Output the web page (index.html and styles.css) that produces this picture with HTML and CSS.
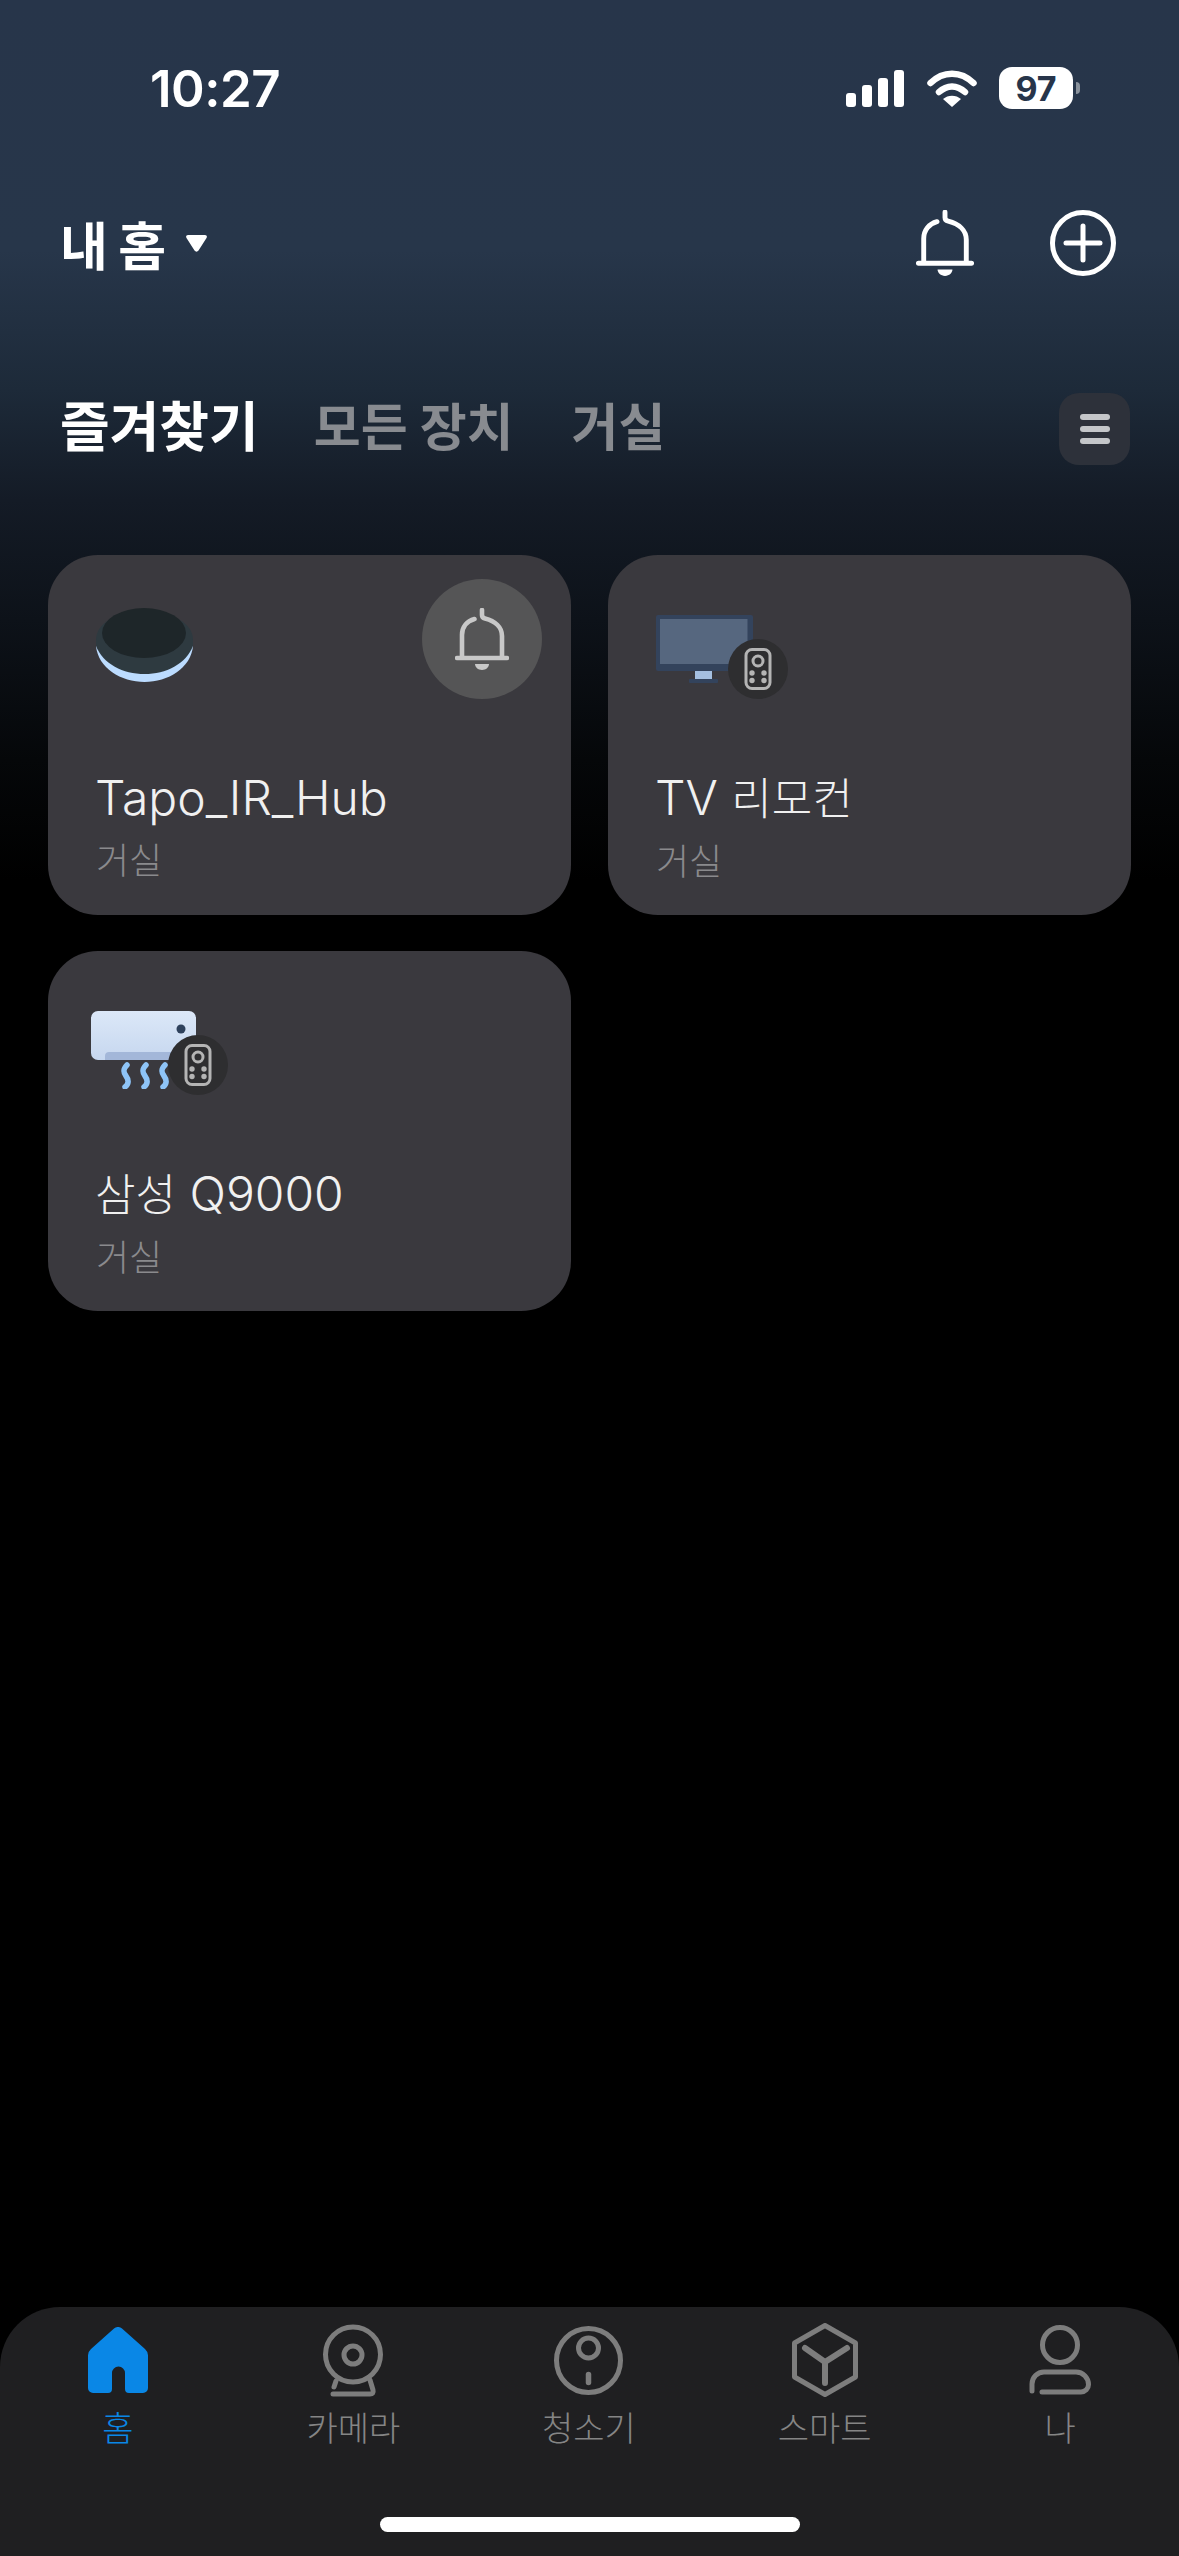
FILE: index.html
```html
<!DOCTYPE html>
<html lang="ko">
<head>
    <meta charset="UTF-8">
    <meta name="viewport" content="width=device-width, initial-scale=1.0">
    <title>내 홈</title>
    <link rel="stylesheet" href="styles.css">
</head>
<body>
    <svg class="defs" width="0" height="0">
        <symbol id="bell" viewBox="0 0 54 62">
            <path d="M7 50V27C7 19 12 13 19.5 11M27 2v5c0 2 1 3 3 3.5C40 13 47 19 47 28v22M2 50h50" fill="none" stroke="currentColor" stroke-width="4.6" stroke-linecap="round"/>
            <path d="M20 56h14c0 3-3 6-7 6s-7-3-7-6z" fill="currentColor"/>
        </symbol>
        <symbol id="remote" viewBox="0 0 60 60">
            <rect x="18" y="10.500" width="24" height="39" rx="6" fill="none" stroke="currentColor" stroke-width="3"/>
            <circle cx="30" cy="22" r="5" fill="none" stroke="currentColor" stroke-width="3"/>
            <circle cx="24" cy="34" r="2.700" fill="currentColor"/>
            <circle cx="36" cy="34" r="2.700" fill="currentColor"/>
            <circle cx="24" cy="41.500" r="2.700" fill="currentColor"/>
            <circle cx="36" cy="41.500" r="2.700" fill="currentColor"/>
        </symbol>
    </svg>

    <div class="status">
        <span class="time">10:27</span>
        <div class="status-icons">
            <div class="signal">
                <i class="s1"></i><i class="s2"></i><i class="s3"></i><i class="s4"></i>
            </div>
            <svg class="wifi" viewBox="0 0 50 37">
                <path d="M3.500 13C16 .5 34 .5 46.500 13M12 22c8-7.500 18-7.500 26 0" fill="none" stroke="#fff" stroke-width="6.500" stroke-linecap="round"/>
                <path d="M25 37l-9-8c5-4.500 13-4.500 18 0z" fill="#fff"/>
            </svg>
            <div class="battery"><span class="battery-level">97</span></div>
            <i class="battery-nub"></i>
        </div>
    </div>

    <div class="header">
        <div class="home-name">
            <span>내 홈</span>
            <svg class="caret" viewBox="0 0 21 17"><path d="M2 0h17c1.500 0 2.500 1.500 1.500 3l-8 12.500c-1 1.500-3 1.500-4 0L.5 3C-.5 1.500.5 0 2 0z" fill="#fff"/></svg>
        </div>
        <div class="header-actions">
            <svg class="header-bell"><use href="#bell"/></svg>
            <svg class="header-add" viewBox="0 0 66 66">
                <circle cx="33" cy="33" r="30.500" fill="none" stroke="#fff" stroke-width="5"/>
                <path d="M33 16v34M16 33h34" stroke="#fff" stroke-width="5" stroke-linecap="round"/>
            </svg>
        </div>
    </div>

    <div class="tabs">
        <span class="tab active">즐겨찾기</span>
        <span class="tab">모든 장치</span>
        <span class="tab">거실</span>
        <div class="menu-btn"><i></i><i></i><i></i></div>
    </div>

    <div class="cards">
        <div class="card">
            <svg class="thumb" viewBox="-5 0 110 85">
                <path d="M0 38C2 60 25 74 48.500 74S95 60 97 38z" fill="#bcdcff"/>
                <path d="M0 32C0 15 20 4 48.500 4S97 15 97 32v6C90 56 70 66 48.500 66S7 56 0 38z" fill="#2e3a40"/>
                <ellipse cx="48" cy="25" rx="42" ry="25" fill="#1e2629"/>
            </svg>
            <div class="notify"><svg class="notify-bell"><use href="#bell"/></svg></div>
            <div class="name">Tapo_IR_Hub</div>
            <div class="room">거실</div>
        </div>
        <div class="card">
            <svg class="thumb" viewBox="-5 -7 110 85">
                <rect width="97" height="56" rx="2" fill="#33435c"/>
                <rect x="4" y="4" width="87.500" height="45" fill="#56677f"/>
                <rect x="39" y="56" width="17" height="8" fill="#a5bfe0"/>
                <rect x="33" y="64" width="29" height="4" rx="1" fill="#33435c"/>
            </svg>
            <div class="badge"><svg class="badge-remote"><use href="#remote"/></svg></div>
            <div class="name">TV <span class="ko">리모컨</span></div>
            <div class="room">거실</div>
        </div>
        <div class="card">
            <svg class="thumb" viewBox="0 -7 110 85">
                <defs>
                    <linearGradient id="acBody" x1="0" y1="0" x2="0" y2="1">
                        <stop offset="0" stop-color="#dce8f8"/>
                        <stop offset="1" stop-color="#c6d7ef"/>
                    </linearGradient>
                </defs>
                <rect width="105" height="49" rx="7" fill="url(#acBody)"/>
                <path d="M14 49v-4c0-2.500 1.500-4 4-4h76v8z" fill="#a3b7d9"/>
                <circle cx="90" cy="18" r="4.500" fill="#2e415c"/>
                <path d="M36 54c-4 4-4 7-1 11s3 8-1 11M55 54c-4 4-4 7-1 11s3 8-1 11M74 54c-4 4-4 7-1 11s3 8-1 11" fill="none" stroke="#8ec4f7" stroke-width="5.500" stroke-linecap="round"/>
            </svg>
            <div class="badge"><svg class="badge-remote"><use href="#remote"/></svg></div>
            <div class="name"><span class="ko">삼성</span> Q9000</div>
            <div class="room">거실</div>
        </div>
    </div>

    <div class="tabbar">
        <div class="tabbar-items">
            <div class="tabbar-item active">
                <div class="tabbar-icon">
                    <svg class="ic-home" viewBox="0 0 60 66">
                        <path d="M26 1.500a6 6 0 0 1 8 0L57 22a9 9 0 0 1 3 7v32a5 5 0 0 1-5 5H41a4 4 0 0 1-4-4V46a6.500 6.500 0 0 0-13 0v16a4 4 0 0 1-4 4H5a5 5 0 0 1-5-5V29a9 9 0 0 1 3-7z" fill="currentColor"/>
                    </svg>
                </div>
                <span>홈</span>
            </div>
            <div class="tabbar-item">
                <div class="tabbar-icon">
                    <svg class="ic-camera" viewBox="0 0 60 73">
                        <circle cx="30" cy="30.500" r="27.500" fill="none" stroke="currentColor" stroke-width="5"/>
                        <circle cx="30" cy="31" r="9" fill="none" stroke="currentColor" stroke-width="5"/>
                        <path d="M13 57l-2 6M47 56l3 10q1 4-3 4H10" fill="none" stroke="currentColor" stroke-width="5" stroke-linecap="round"/>
                    </svg>
                </div>
                <span>카메라</span>
            </div>
            <div class="tabbar-item">
                <div class="tabbar-icon">
                    <svg class="ic-vacuum" viewBox="0 0 69 69">
                        <circle cx="34.500" cy="34.500" r="32" fill="none" stroke="currentColor" stroke-width="5"/>
                        <circle cx="34.500" cy="22" r="10" fill="none" stroke="currentColor" stroke-width="5"/>
                        <path d="M34.500 48.500v8" stroke="currentColor" stroke-width="5.500" stroke-linecap="round"/>
                    </svg>
                </div>
                <span>청소기</span>
            </div>
            <div class="tabbar-item">
                <div class="tabbar-icon">
                    <svg class="ic-cube" viewBox="0 0 66 74">
                        <path d="M33 2.500L63.500 20v34L33 71.500 2.500 54V20z" fill="none" stroke="currentColor" stroke-width="5" stroke-linejoin="round"/>
                        <path d="M13 25l20 14 22-14M33 39v21" fill="none" stroke="currentColor" stroke-width="6" stroke-linecap="round" stroke-linejoin="round"/>
                    </svg>
                </div>
                <span>스마트</span>
            </div>
            <div class="tabbar-item">
                <div class="tabbar-icon">
                    <svg class="ic-person" viewBox="0 0 62 70">
                        <circle cx="31" cy="20" r="17.500" fill="none" stroke="currentColor" stroke-width="5"/>
                        <path d="M3 66v-7a12 12 0 0 1 12-12h32a12.500 12.500 0 0 1 12.500 12.500 7.500 7.500 0 0 1-7.500 7.500H13" fill="none" stroke="currentColor" stroke-width="5" stroke-linecap="round"/>
                    </svg>
                </div>
                <span>나</span>
            </div>
        </div>
        <div class="home-bar"></div>
    </div>
</body>
</html>
```

FILE: styles.css
```css
*{
    box-sizing: border-box;
}
body{
    margin: 0;
    width: 1179px;
    height: 2556px;
    overflow: hidden;
    display: flex;
    flex-direction: column;
    font-family: "Inter", "Noto Sans CJK KR", sans-serif;
    color: #fff;
    background: linear-gradient(to bottom, #27354a 0, #27364a 250px, #1d2a39 390px, #141b26 500px, #0d1219 620px, #050709 760px, #000 880px);
}
i{
    display: block;
}
.defs{
    position: absolute;
}

/* status bar */
.status{
    height: 176px;
    flex: none;
    padding: 0 99px 0 150px;
    display: flex;
    align-items: center;
    justify-content: space-between;
}
.time{
    font-size: 51px;
    font-weight: 600;
    letter-spacing: -.5px;
}
.status-icons{
    display: flex;
    align-items: center;
}
.signal{
    display: flex;
    align-items: flex-end;
    gap: 6px;
    height: 37px;
}
.signal i{
    width: 10px;
    background: #fff;
    border-radius: 3px;
}
.s1{ height: 14px; }
.s2{ height: 22px; }
.s3{ height: 29px; }
.s4{ height: 37px; }
.wifi{
    width: 50px;
    height: 37px;
    margin-left: 23px;
}
.battery{
    width: 74px;
    height: 42px;
    margin-left: 22px;
    background: #fff;
    border-radius: 13px;
    display: flex;
    align-items: center;
    justify-content: center;
}
.battery-level{
    font-size: 34px;
    font-weight: 700;
    color: #27354a;
}
.battery-nub{
    width: 4px;
    height: 12px;
    margin-left: 3px;
    background: #8a929c;
    border-radius: 0 4px 4px 0;
}

/* header */
.header{
    height: 134px;
    flex: none;
    padding: 0 63px 0 60px;
    display: flex;
    align-items: center;
    justify-content: space-between;
}
.home-name{
    display: flex;
    align-items: center;
    gap: 20px;
    font-size: 52px;
    font-weight: 700;
    word-spacing: -2px;
}
.caret{
    width: 21px;
    height: 17px;
}
.header-actions{
    display: flex;
    align-items: center;
    gap: 76px;
}
.header-bell{
    width: 58px;
    height: 66px;
    color: #fff;
}
.header-add{
    width: 66px;
    height: 66px;
}

/* tabs */
.tabs{
    flex: none;
    height: 72px;
    margin-top: 83px;
    padding: 0 49px 0 60px;
    display: flex;
    align-items: center;
}
.tab{
    font-size: 51px;
    font-weight: 700;
    line-height: 60px;
    margin-top: -3px;
    color: #888b90;
    margin-right: 58px;
}
.tab.active{
    font-size: 54px;
    color: #fff;
    margin-right: 55px;
}
.menu-btn{
    margin-left: auto;
    width: 71px;
    height: 72px;
    border-radius: 20px;
    background: #2d313a;
    display: flex;
    flex-direction: column;
    align-items: center;
    justify-content: center;
    gap: 6px;
}
.menu-btn i{
    width: 30px;
    height: 6px;
    border-radius: 3px;
    background: #c4c6c9;
}

/* device cards */
.cards{
    margin-top: 90px;
    padding: 0 48px;
    display: grid;
    grid-template-columns: 523px 523px;
    grid-auto-rows: 360px;
    gap: 36px 37px;
}
.card{
    position: relative;
    padding: 53px 0 0 48px;
    background: #3a393e;
    border-radius: 50px;
}
.thumb{
    display: block;
    width: 110px;
    height: 85px;
    margin-left: -5px;
}
.name{
    margin-top: 77px;
    margin-left: -1px;
    font-size: 48px;
    font-weight: 300;
    line-height: 56px;
    color: #f0f0f0;
    white-space: nowrap;
}
.ko{
    font-size: 44px;
}
.room{
    margin-top: 12px;
    font-size: 36px;
    font-weight: 300;
    line-height: 46px;
    color: #8a8a8d;
}
.notify{
    position: absolute;
    top: 24px;
    right: 29px;
    width: 120px;
    height: 120px;
    border-radius: 50%;
    background: #555556;
    display: flex;
    align-items: center;
    justify-content: center;
}
.notify-bell{
    width: 54px;
    height: 62px;
    color: #c8c8c8;
}
.badge{
    position: absolute;
    left: 120px;
    top: 84px;
    width: 60px;
    height: 60px;
    border-radius: 50%;
    background: #2e2e30;
}
.badge-remote{
    display: block;
    width: 60px;
    height: 60px;
    color: #b4b4b4;
}

/* bottom bar */
.tabbar{
    flex: none;
    margin-top: auto;
    height: 249px;
    background: #1f1f21;
    border-radius: 60px 60px 0 0;
    position: relative;
}
.tabbar-items{
    display: grid;
    grid-template-columns: repeat(5, 1fr);
    padding-right: 1px;
}
.tabbar-item{
    display: flex;
    flex-direction: column;
    align-items: center;
    color: #858585;
    font-size: 34px;
    font-weight: 300;
}
.tabbar-item.active{
    color: #0a87e6;
}
.tabbar-icon{
    height: 92px;
    display: flex;
    align-items: center;
    justify-content: center;
    margin-top: 7px;
    margin-bottom: 3px;
}
.tabbar-icon svg{
    color: #7d7d7d;
}
.tabbar-item.active .tabbar-icon svg{
    color: #0a87e6;
}
.tabbar-item span{
    line-height: 40px;
}
.ic-home{ width: 60px; height: 66px; }
.ic-camera{ width: 60px; height: 73px; }
.ic-vacuum{ width: 69px; height: 69px; }
.ic-cube{ width: 66px; height: 74px; }
.ic-person{ width: 62px; height: 70px; }
.home-bar{
    position: absolute;
    left: 380px;
    bottom: 24px;
    width: 420px;
    height: 15px;
    border-radius: 8px;
    background: #fff;
}
```
